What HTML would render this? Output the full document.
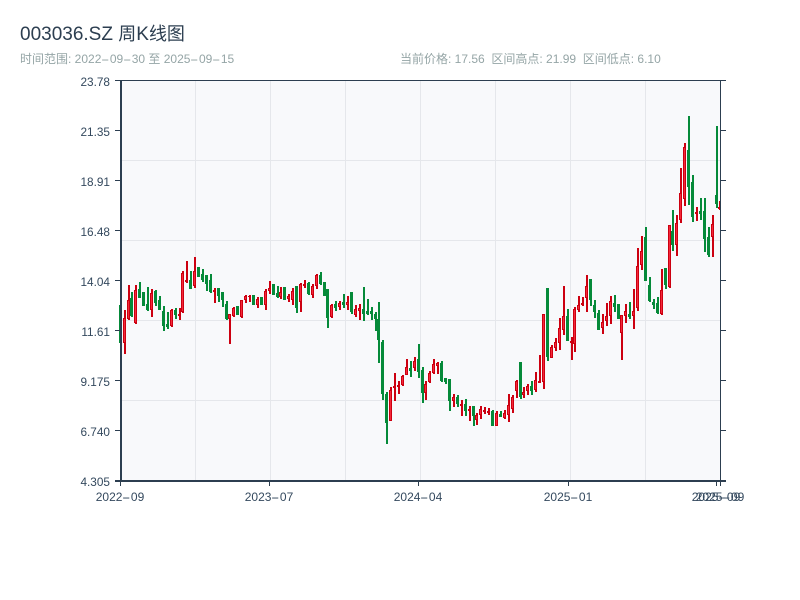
<!DOCTYPE html>
<html>
<head>
<meta charset="utf-8">
<style>
html,body{margin:0;padding:0;background:#fff;width:800px;height:600px;overflow:hidden;position:relative}
svg{display:block;position:absolute;left:0;top:0}
.t{position:absolute;font-family:"Liberation Sans","WenQuanYi Zen Hei","Noto Sans CJK SC",sans-serif;white-space:pre;font-size:12px;line-height:14px;color:#34495e}
.s{color:#95a5a6;top:52px}
.y{left:60px;width:50px;text-align:right;font-size:11.8px}
.x{top:490px;width:100px;text-align:center}
.h{display:inline-block;width:8.5px;text-align:center;transform:scaleX(2.1);font-style:normal}
.c{font-size:18px}
</style>
</head>
<body>
<svg id="c" xmlns="http://www.w3.org/2000/svg" width="800" height="600" viewBox="0 0 800 600">
<rect x="120" y="81" width="600" height="400" fill="#f8f9fb"/>
<g fill="#e5e7eb" shape-rendering="crispEdges">
<rect x="195" y="81" width="1" height="400"/><rect x="270" y="81" width="1" height="400"/><rect x="345" y="81" width="1" height="400"/><rect x="420" y="81" width="1" height="400"/><rect x="495" y="81" width="1" height="400"/><rect x="570" y="81" width="1" height="400"/><rect x="645" y="81" width="1" height="400"/>
<rect x="120" y="160" width="600" height="1"/><rect x="120" y="240" width="600" height="1"/><rect x="120" y="320" width="600" height="1"/><rect x="120" y="400" width="600" height="1"/>
</g>
<g id="k" shape-rendering="crispEdges"></g>
<g fill="#2c3e50" shape-rendering="crispEdges">
<rect x="120" y="80" width="2" height="402"/>
<rect x="115" y="480" width="611" height="2"/>
<rect x="115" y="80" width="611" height="1"/>
<rect x="720" y="80" width="1" height="402"/>
<rect x="115" y="130" width="5" height="1"/><rect x="115" y="180" width="5" height="1"/><rect x="115" y="230" width="5" height="1"/><rect x="115" y="280" width="5" height="1"/><rect x="115" y="330" width="5" height="1"/><rect x="115" y="380" width="5" height="1"/><rect x="115" y="430" width="5" height="1"/>
<rect x="721" y="130" width="5" height="1"/><rect x="721" y="180" width="5" height="1"/><rect x="721" y="230" width="5" height="1"/><rect x="721" y="280" width="5" height="1"/><rect x="721" y="330" width="5" height="1"/><rect x="721" y="380" width="5" height="1"/><rect x="721" y="430" width="5" height="1"/>
<rect x="120" y="482" width="1" height="4"/><rect x="269" y="482" width="1" height="4"/><rect x="418" y="482" width="1" height="4"/><rect x="568" y="482" width="1" height="4"/><rect x="716" y="482" width="1" height="4"/><rect x="720" y="482" width="1" height="4"/>
</g>
</svg>
<div class="t" style="left:20px;top:22px;font-size:19px;line-height:24px;color:#2c3e50">003036.SZ <span class="c">周</span>K<span class="c">线图</span></div>
<div class="t s" style="left:20px">时间范围: 2022<i class="h">-</i>09<i class="h">-</i>30 至 2025<i class="h">-</i>09<i class="h">-</i>15</div>
<div class="t s" style="left:400px">当前价格: 17.56  区间高点: 21.99  区间低点: 6.10</div>
<div class="t y" style="top:75px">23.78</div>
<div class="t y" style="top:125px">21.35</div>
<div class="t y" style="top:175px">18.91</div>
<div class="t y" style="top:225px">16.48</div>
<div class="t y" style="top:275px">14.04</div>
<div class="t y" style="top:325px">11.61</div>
<div class="t y" style="top:375px">9.175</div>
<div class="t y" style="top:425px">6.740</div>
<div class="t y" style="top:475px">4.305</div>
<div class="t x" style="left:70px">2022<i class="h">-</i>09</div>
<div class="t x" style="left:219px">2023<i class="h">-</i>07</div>
<div class="t x" style="left:368px">2024<i class="h">-</i>04</div>
<div class="t x" style="left:518px">2025<i class="h">-</i>01</div>
<div class="t x" style="left:666px">2025<i class="h">-</i>09</div>
<div class="t x" style="left:670px">2025<i class="h">-</i>09</div>
<script>
var d=[
["g",297,343,305,343],["r",310,354,318,343],["r",285,320,300,319],["g",292,317,298,316],["r",285,324,290,323],["g",282,298,289,298],["g",292,306,292,306],["g",287,311,304,310],["r",289,317,293,310],["g",290,306,291,303],
["g",296,310,300,310],["g",306,331,311,326],["g",312,329,324,327],["r",309,327,310,326],["g",308,319,310,315],["r",308,320,314,316],["r",271,313,273,312],["r",261,283,280,282],["g",271,289,280,289],["r",257,288,271,286],
["g",267,277,267,277],["g",269,282,274,280],["g",275,291,275,284],["g",274,293,280,292],["r",288,303,290,292],["g",288,302,288,296],["g",292,307,292,300],["g",301,320,304,319],["r",314,344,314,319],["r",307,317,308,316],
["g",306,315,306,315],["r",300,318,300,317],["r",295,303,296,300],["r",295,302,296,297],["g",295,305,295,305],["r",297,308,299,305],["g",297,305,297,305],["r",289,310,291,305],["r",281,294,288,291],["g",284,295,284,295],
["g",286,298,293,297],["r",287,299,292,297],["g",287,300,287,300],["r",294,302,296,299],["r",288,305,291,300],["g",286,313,286,308],["r",283,312,284,302],["r",280,288,284,286],["g",282,295,283,294],["r",284,298,286,295],
["r",274,289,275,286],["g",272,285,275,284],["g",282,296,282,296],["g",289,328,289,318],["r",304,318,305,317],["g",301,311,304,308],["r",301,310,303,307],["g",294,308,302,305],["r",296,310,302,305],["g",292,314,292,312],
["r",305,317,309,315],["r",304,320,308,311],["g",287,321,309,314],["g",299,315,311,314],["g",307,320,311,314],["g",312,331,314,319],["g",302,363,319,340],["g",340,400,342,394],["g",392,444,394,423],["r",387,421,390,421],
["r",373,401,386,388],["r",381,394,385,387],["r",375,386,376,385],["r",359,375,367,375],["g",361,377,368,371],["r",357,371,361,368],["g",344,378,359,372],["g",367,403,370,393],["r",381,400,384,393],["r",371,383,373,382],
["r",359,374,364,373],["r",362,374,363,366],["g",361,382,363,381],["g",378,384,378,382],["g",379,411,379,401],["r",394,407,397,401],["g",395,407,397,404],["r",400,416,404,406],["g",399,416,404,411],["r",406,421,409,411],
["g",406,426,406,416],["r",413,425,415,420],["r",406,419,409,415],["r",407,414,410,412],["r",408,415,411,413],["g",410,426,411,426],["r",411,426,413,426],["g",411,417,414,417],["r",410,419,413,418],["r",394,422,405,415],
["r",395,413,397,409],["r",380,398,381,391],["g",362,399,362,397],["r",387,398,392,395],["r",384,395,386,391],["g",381,395,386,391],["r",372,392,380,390],["r",355,383,381,383],["r",314,389,314,382],["g",288,361,288,357],
["r",345,358,347,358],["r",338,351,342,348],["r",318,350,328,343],["r",286,335,316,330],["g",309,341,316,341],["r",337,360,341,343],["r",307,352,309,344],["r",296,312,305,310],["r",297,306,303,305],["r",275,312,286,298],
["g",279,306,279,300],["g",300,318,305,312],["g",310,330,313,330],["r",314,334,322,328],["r",303,326,316,321],["r",296,324,301,316],["g",295,312,303,307],["g",304,319,304,319],["r",315,360,315,333],["r",304,323,311,316],
["g",302,319,314,317],["r",289,329,311,316],["r",248,311,266,308],["r",236,270,251,265],["g",227,281,237,281],["g",277,302,285,301],["g",299,309,302,305],["g",297,314,303,313],["r",269,315,290,314],["g",268,289,268,285],
["r",225,288,225,287],["g",210,251,231,245],["r",215,256,223,245],["r",168,223,193,220],["r",143,206,147,199],["g",116,205,150,187],["g",175,222,182,217],["r",207,221,212,214],["g",198,220,211,214],["g",198,252,211,239],
["g",227,257,237,255],["r",215,257,224,237],["g",126,208,195,204],["r",201,210,207,209]
];
var h='';
for(var i=0;i<d.length;i++){
 var c=d[i],x=120.2+3.92*i,wx=Math.round(x-0.5),bx=Math.round(x-1.5);
 if(c[0]=='g'){
  h+='<rect x="'+wx+'" y="'+c[1]+'" width="2" height="'+(c[2]-c[1])+'" fill="#058a39"/>';
  h+='<rect x="'+bx+'" y="'+c[3]+'" width="3" height="'+(c[4]-c[3])+'" fill="#058a39"/>';
 }else{
  h+='<rect x="'+wx+'" y="'+c[1]+'" width="2" height="'+(c[2]-c[1])+'" fill="#cc0010"/>';
  h+='<rect x="'+bx+'" y="'+c[3]+'" width="3" height="'+(c[4]-c[3])+'" fill="#cc0010"/>';
  if(c[4]-c[3]>2)h+='<rect x="'+(bx+1)+'" y="'+(c[3]+1)+'" width="1" height="'+(c[4]-c[3]-2)+'" fill="#f4283a"/>';
 }
}
document.getElementById('k').innerHTML=h;
</script>
</body>
</html>
